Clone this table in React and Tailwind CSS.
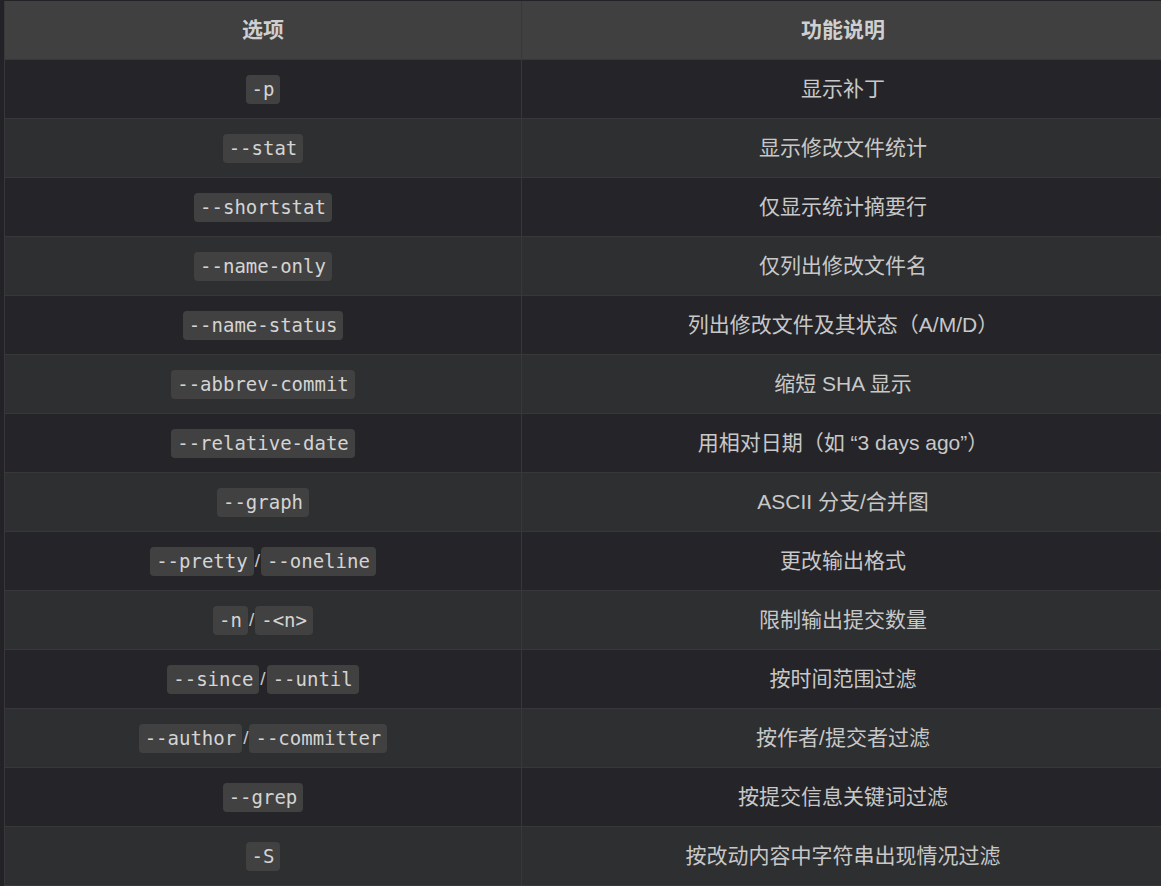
import React from "react";

const rows = [
  [["-p"], "显示补丁"],
  [["--stat"], "显示修改文件统计"],
  [["--shortstat"], "仅显示统计摘要行"],
  [["--name-only"], "仅列出修改文件名"],
  [["--name-status"], "列出修改文件及其状态（A/M/D）"],
  [["--abbrev-commit"], "缩短 SHA 显示"],
  [["--relative-date"], "用相对日期（如 “3 days ago”）"],
  [["--graph"], "ASCII 分支/合并图"],
  [["--pretty", "--oneline"], "更改输出格式"],
  [["-n", "-<n>"], "限制输出提交数量"],
  [["--since", "--until"], "按时间范围过滤"],
  [["--author", "--committer"], "按作者/提交者过滤"],
  [["--grep"], "按提交信息关键词过滤"],
  [["-S"], "按改动内容中字符串出现情况过滤"],
];

function Code({ children }) {
  return (
    <code className="rounded-[4px] bg-[#414141] px-[6px] py-[3px] text-[19px] leading-[23px] text-[#d4d4d4] [font-family:'DejaVu_Sans_Mono','Liberation_Mono',monospace]">
      {children}
    </code>
  );
}

export default function App() {
  return (
    <div className="min-h-[886px] w-[1161px] overflow-hidden bg-[#232327] pl-[4px] pt-[1px] [font-family:'Liberation_Sans','Noto_Sans_CJK_SC',sans-serif]">
      <div className="w-[1160px] border-l border-[#38383b]">
        <div className="grid h-[59px] grid-cols-[517px_1fr] border-b border-[#38383b] bg-[#404040]">
          <div className="flex items-center justify-center border-r border-[#38383b] text-[21px] font-bold text-[#cfcfcf]">
            选项
          </div>
          <div className="flex items-center justify-center text-[21px] font-bold text-[#cfcfcf]">
            功能说明
          </div>
        </div>
        {rows.map(([codes, desc], i) => (
          <div
            key={i}
            className={
              "grid h-[59px] grid-cols-[517px_1fr] border-b border-[#38383b] " +
              (i % 2 === 0 ? "bg-[#252529]" : "bg-[#2e2f31]")
            }
          >
            <div className="flex items-center justify-center gap-[1px] border-r border-[#38383b] text-[20px] text-[#c8c8c8]">
              {codes.map((c, j) => (
                <React.Fragment key={j}>
                  {j > 0 && <span className="text-[19px]">/</span>}
                  <Code>{c}</Code>
                </React.Fragment>
              ))}
            </div>
            <div className="flex items-center justify-center text-[21px] text-[#c8c8c8]">
              {desc}
            </div>
          </div>
        ))}
      </div>
    </div>
  );
}
